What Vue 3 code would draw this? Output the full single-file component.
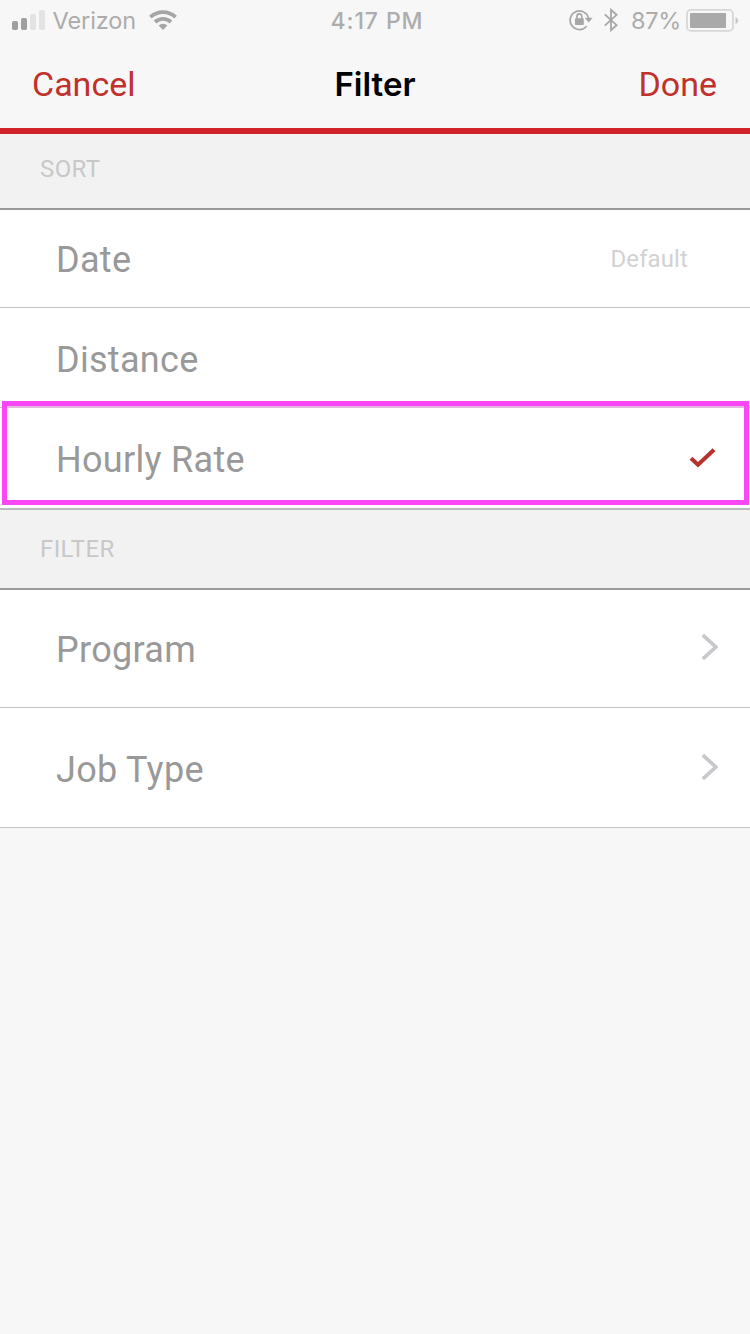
<template>
  <div class="screen">
    <!-- Status bar -->
    <div class="status">
      <div class="status-side">
        <svg class="signal" width="34" height="20" viewBox="0 0 34 20">
          <rect x="0" y="11" width="6" height="9" rx="1.8" fill="#9f9f9f" />
          <rect x="9" y="8" width="6" height="12" rx="1.8" fill="#9f9f9f" />
          <rect x="18" y="4" width="6" height="16" rx="1.8" fill="#e3e3e3" />
          <rect x="27" y="0" width="6" height="20" rx="1.8" fill="#e3e3e3" />
        </svg>
        <span class="carrier">Verizon</span>
        <svg class="wifi" width="28" height="20" viewBox="0 0 28 20" fill="none" stroke="#a6a6a6" stroke-width="3.8">
          <path d="M1.4 7.1a18.3 18.3 0 0 1 25.2 0" />
          <path d="M6 12a11.6 11.6 0 0 1 16 0" />
          <path d="M9.6 15.6a6.4 6.4 0 0 1 8.8 0L14 20z" fill="#a6a6a6" stroke="none" />
        </svg>
      </div>
      <span class="time">4:17 PM</span>
      <div class="status-side status-side--right">
        <svg class="lock" width="24" height="22" viewBox="0 0 24 22" fill="none" stroke="#a6a6a6" stroke-width="1.7">
          <path d="M17.6 17.2A9.3 9.3 0 1 1 19.4 8.8" />
          <path d="M15.8 8.8h7.8l-3.9 4.6z" fill="#a6a6a6" stroke="none" />
          <rect x="6" y="9.2" width="8.8" height="6.8" rx=".8" fill="#a6a6a6" stroke="none" />
          <path d="M8 10V7.3a2.4 2.4 0 0 1 4.8 0V10" />
        </svg>
        <svg class="bluetooth" width="14" height="24" viewBox="0 0 14 24" fill="none" stroke="#a6a6a6" stroke-width="1.8">
          <path d="M.8 6.4l11.8 10.8L7 22.2V1.8l5.6 5L.8 17.6" />
        </svg>
        <span class="percent">87%</span>
        <svg class="battery" width="53" height="24" viewBox="0 0 53 24">
          <rect x="1" y="1.9" width="46" height="21" rx="4" fill="none" stroke="#d6d6d6" stroke-width="1.8" />
          <rect x="4" y="5" width="36" height="15" rx="1" fill="#a9a9a9" />
          <path d="M49.5 8.9q2.8 1 2.8 3.6t-2.8 3.6z" fill="#c8c8c8" />
        </svg>
      </div>
    </div>

    <!-- Nav bar -->
    <div class="navbar">
      <button type="button" class="nav-btn">Cancel</button>
      <h1 class="nav-title">Filter</h1>
      <button type="button" class="nav-btn nav-btn--done">Done</button>
    </div>

    <!-- Sort options -->
    <div class="section section--sort">SORT</div>
    <div
      v-for="opt in sortOptions"
      :key="opt.id"
      class="row row--sort"
      :class="{ 'row--selected': opt.id === selected }"
      @click="selected = opt.id"
    >
      <span class="label">{{ opt.label }}</span>
      <span v-if="opt.isDefault" class="default">Default</span>
      <svg v-if="opt.id === selected" class="check" width="27" height="20" viewBox="0 0 27 20" fill="none" stroke="#b5322e" stroke-width="4">
        <polyline points="2,10.2 9,16.8 25,1.8" />
      </svg>
    </div>

    <!-- Filter categories -->
    <div class="section section--filter">FILTER</div>
    <div v-for="f in filters" :key="f" class="row row--filter">
      <span class="label">{{ f }}</span>
      <svg class="chevron" width="18" height="28" viewBox="0 0 18 28" fill="none" stroke="#c7c7cc" stroke-width="3.6">
        <polyline points="2.8,2.2 15.8,14 2.8,25.8" />
      </svg>
    </div>
  </div>
</template>

<script setup>
import { ref } from 'vue'

const selected = ref('rate')

const sortOptions = [
  { id: 'date', label: 'Date', isDefault: true },
  { id: 'distance', label: 'Distance' },
  { id: 'rate', label: 'Hourly Rate' },
]

const filters = ['Program', 'Job Type']
</script>

<style>
body { background: #f7f7f7; }
</style>

<style scoped>
.screen {
  min-height: 1334px;
  background: #f7f7f7;
  font-family: Roboto, sans-serif;
}

.status {
  height: 40px;
  display: grid;
  grid-template-columns: 1fr auto 1fr;
  grid-template-rows: 40px;
  align-items: center;
  padding: 0 11px 0 12px;
  font-family: Inter, sans-serif;
  font-size: 24px;
  line-height: 30px;
  color: #acacac;
}
.status-side { display: flex; align-items: center; height: 40px; }
.status-side--right { justify-content: flex-end; }
.carrier { padding-top: 2px; margin-left: 6.5px; width: 83.5px; white-space: nowrap; font-size: 23.5px; letter-spacing: -0.1px; }
.wifi { margin-left: 13px; }
.time { padding: 2px 0 0 3px; font-weight: 500; font-size: 23px; letter-spacing: 0.9px; color: #adadad; }
.bluetooth { margin-left: 11px; }
.percent { padding-top: 2px; margin-left: 13px; width: 49px; white-space: nowrap; font-size: 23.5px; letter-spacing: -0.3px; }
.battery { margin-left: 6px; }

.navbar {
  height: 88px;
  display: grid;
  grid-template-columns: 1fr auto 1fr;
  align-items: center;
  padding: 0 33px 0 32px;
  border-bottom: 6px solid #d2232a;
}
.nav-btn {
  border: 0;
  padding: 0;
  background: none;
  text-align: left;
  font-family: Roboto, sans-serif;
  font-size: 34px;
  line-height: 88px;
  color: #c0312b;
  cursor: pointer;
}
.nav-btn--done { text-align: right; }
.nav-title {
  margin: 0;
  padding-left: 1px;
  font-family: Inter, sans-serif;
  font-size: 33px;
  font-weight: 600;
  line-height: 88px;
  color: #000;
}

.section {
  box-sizing: border-box;
  padding-left: 40px;
  background: #f2f2f2;
  border-bottom: 2px solid #999;
  font-size: 24px;
  letter-spacing: 0.4px;
  color: #c8c8c8;
}
.section--sort { height: 76px; line-height: 70px; }
.section--filter { height: 80px; line-height: 78px; }

.row {
  box-sizing: border-box;
  position: relative;
  display: flex;
  align-items: center;
  justify-content: space-between;
  height: 100px;
  padding: 0 32px 0 56px;
  background: #fff;
  border-bottom: 1px solid #c4c4c4;
}
.section--sort + .row--sort { height: 98px; }
.row--selected {
  height: 102px;
  border-bottom: 2px solid #bbb;
}
/* Outline around the chosen option */
.row--selected::after {
  content: '';
  position: absolute;
  top: -7px;
  left: 2px;
  right: 1px;
  height: 94px;
  border: 5px solid #fa46f5;
  box-shadow: inset 0 2px #e3b9e2;
}
.row--filter { height: 120px; }
.section--filter + .row--filter { height: 118px; }

.label {
  padding-top: 4px;
  font-size: 36px;
  letter-spacing: 0.3px;
  line-height: 48px;
  color: #999;
}
.section + .row .label { padding-top: 2px; }
.default {
  margin-right: 30px;
  font-size: 24px;
  letter-spacing: 0.1px;
  color: #d2d2d2;
}
.check { margin-right: 2px; }
.chevron { margin-bottom: 2px; }
.section + .row .chevron { margin-bottom: 3px; }
</style>
